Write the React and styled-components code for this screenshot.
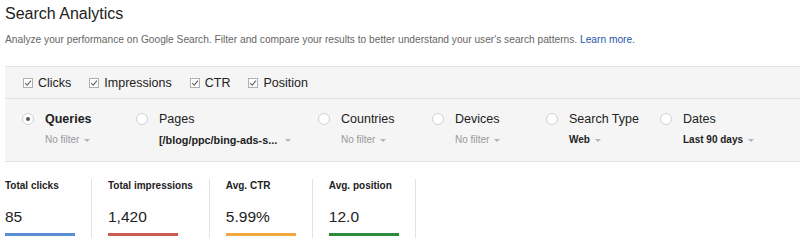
import * as React from 'react';
import styled, { createGlobalStyle } from 'styled-components';

const GlobalStyle = createGlobalStyle`
  body {
    margin: 0;
    background: #fff;
    font-family: "Liberation Sans", Arial, sans-serif;
    color: #222;
  }
`;

const Page = styled.div`
  width: 800px;
  height: 246px;
  overflow: hidden;
`;

const Title = styled.h1`
  margin: 4px 0 0 5px;
  font-size: 16px;
  line-height: 20px;
  font-weight: normal;
  color: #222;
`;

const Intro = styled.p`
  margin: 9px 0 0 5px;
  font-size: 10.2px;
  line-height: 14px;
  color: #666;
`;

const LearnMore = styled.a`
  color: #1f55a8;
  text-decoration: none;
`;

const Panel = styled.div`
  margin: 19px 0 0 5px;
  background: #f5f5f5;
  border-top: 1px solid #e3e3e3;
  border-bottom: 1px solid #e3e3e3;
`;

const MetricToggles = styled.div`
  display: flex;
  align-items: center;
  height: 31px;
  padding-left: 18px;
  border-bottom: 1px solid #e3e3e3;
`;

const Toggle = styled.label`
  display: flex;
  align-items: center;
  gap: 5px;
  margin-right: 18px;
  font-size: 12.5px;
  color: #222;
`;

const Dimensions = styled.div`
  display: flex;
  padding: 12px 0 14px 17px;
`;

const Dimension = styled.div`
  display: flex;
  width: ${props => props.width}px;
  flex-shrink: 0;
`;

const Radio = styled.span`
  position: relative;
  width: 12px;
  height: 12px;
  margin: 2px 11px 0 0;
  flex-shrink: 0;
  box-sizing: border-box;
  border: 1px solid #d2d2d2;
  border-radius: 50%;
  background: #fff;

  &::after {
    content: '';
    display: ${props => (props.checked ? 'block' : 'none')};
    position: absolute;
    left: 3px;
    top: 3px;
    width: 4px;
    height: 4px;
    border-radius: 50%;
    background: #555;
  }
`;

const DimensionText = styled.div`
  display: flex;
  flex-direction: column;
`;

const DimensionName = styled.div`
  font-size: 12.5px;
  line-height: 16px;
  font-weight: ${props => (props.active ? 'bold' : 'normal')};
  color: #222;
`;

const Filter = styled.div`
  display: flex;
  align-items: center;
  margin-top: 6px;
  font-size: ${props => props.size || 10}px;
  line-height: 14px;
  font-weight: ${props => (props.set ? 'bold' : 'normal')};
  color: ${props => (props.set ? '#222' : '#999')};
`;

const Caret = styled.span`
  width: 0;
  height: 0;
  margin-left: ${props => props.gap || 5}px;
  margin-top: 1px;
  border-left: 3px solid transparent;
  border-right: 3px solid transparent;
  border-top: 3px solid #b5b5b5;
`;

const Metrics = styled.div`
  display: flex;
  margin: 17px 0 0 5px;
`;

const Metric = styled.div`
  display: flex;
  flex-direction: column;
  padding: 0 16px;
  border-right: 1px solid #e3e3e3;

  &:first-child {
    padding-left: 0;
  }
`;

const MetricLabel = styled.div`
  font-size: 10px;
  line-height: 14px;
  font-weight: bold;
  color: #222;
  white-space: nowrap;
`;

const MetricValue = styled.div`
  margin-top: 14px;
  font-size: 15.5px;
  line-height: 20px;
  color: #222;
`;

const MetricBar = styled.div`
  width: 70px;
  height: 3px;
  margin: 6px 0 2px;
  background: ${props => props.color};
`;

const CheckIcon = () => (
  <svg width="10" height="10" viewBox="0 0 10 10">
    <rect x="0.5" y="0.5" width="9" height="9" fill="#fff" stroke="#b0b0b0" />
    <path d="M2.2 5.2 L4.2 7.2 L8 2.6" fill="none" stroke="#666" strokeWidth="1.1" />
  </svg>
);

const toggles = ['Clicks', 'Impressions', 'CTR', 'Position'];

const dimensions = [
  { name: 'Queries', filter: 'No filter', width: 114, checked: true },
  { name: 'Pages', filter: '[/blog/ppc/bing-ads-s...', width: 182, set: true, gap: 8, size: 10.8 },
  { name: 'Countries', filter: 'No filter', width: 114 },
  { name: 'Devices', filter: 'No filter', width: 114 },
  { name: 'Search Type', filter: 'Web', width: 114, set: true },
  { name: 'Dates', filter: 'Last 90 days', width: 114, set: true },
];

const metrics = [
  { label: 'Total clicks', value: '85', color: '#5a8dd6' },
  { label: 'Total impressions', value: '1,420', color: '#cc5a50' },
  { label: 'Avg. CTR', value: '5.99%', color: '#f0a93c' },
  { label: 'Avg. position', value: '12.0', color: '#2f8c3e' },
];

export default function App() {
  return (
    <Page>
      <GlobalStyle />
      <Title>Search Analytics</Title>
      <Intro>
        Analyze your performance on Google Search. Filter and compare your results to better
        understand your user's search patterns. <LearnMore href="#">Learn more.</LearnMore>
      </Intro>
      <Panel>
        <MetricToggles>
          {toggles.map(t => (
            <Toggle key={t}>
              <CheckIcon />
              {t}
            </Toggle>
          ))}
        </MetricToggles>
        <Dimensions>
          {dimensions.map(d => (
            <Dimension key={d.name} width={d.width}>
              <Radio checked={d.checked} />
              <DimensionText>
                <DimensionName active={d.checked}>{d.name}</DimensionName>
                <Filter set={d.set} size={d.size}>
                  {d.filter}
                  <Caret gap={d.gap} />
                </Filter>
              </DimensionText>
            </Dimension>
          ))}
        </Dimensions>
      </Panel>
      <Metrics>
        {metrics.map(m => (
          <Metric key={m.label}>
            <MetricLabel>{m.label}</MetricLabel>
            <MetricValue>{m.value}</MetricValue>
            <MetricBar color={m.color} />
          </Metric>
        ))}
      </Metrics>
    </Page>
  );
}
